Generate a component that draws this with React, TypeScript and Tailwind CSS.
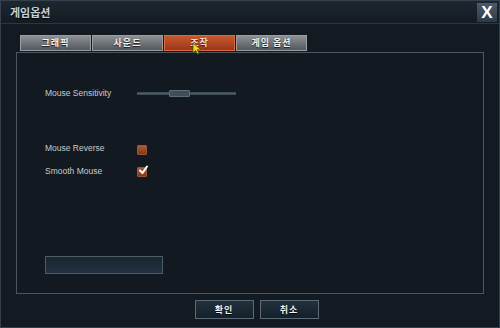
const kr = { fontFamily: '"Noto Sans CJK KR", "Noto Sans", sans-serif' };
const en = { fontFamily: '"Liberation Sans", Arial, sans-serif' };

function Tab({ label, active }: { label: string; active?: boolean }) {
  return (
    <div
      style={kr}
      className={
        active
          ? "w-[71px] h-[16px] flex items-center justify-center text-[9px] font-bold tracking-[1px] text-[#f4e0d6] border border-[#d86a44] bg-gradient-to-b from-[#c8582e] to-[#9c3718] [text-shadow:0_1px_1px_#3a1206]"
          : "w-[71px] h-[16px] flex items-center justify-center text-[9px] font-bold tracking-[1px] text-[#f2f2f2] border border-[#9a9ea2] bg-gradient-to-b from-[#8d9194] to-[#55595d] [text-shadow:0_1px_1px_#1a1a1a]"
      }
    >
      {label}
    </div>
  );
}

function Checkbox({ checked }: { checked?: boolean }) {
  return (
    <div className="relative w-[10px] h-[10px] rounded-[1px] border border-[#9a5636] bg-gradient-to-b from-[#b05a32] to-[#7e3a1c]">
      {checked && (
        <svg className="absolute -top-[3px] left-[0px]" width="11" height="11" viewBox="0 0 11 11">
          <path d="M2 5.5 L4.5 8 L9 1.5" stroke="#ffffff" strokeWidth="2" fill="none" strokeLinecap="round" />
        </svg>
      )}
    </div>
  );
}

function Btn({ label }: { label: string }) {
  return (
    <div
      style={kr}
      className="w-[59px] h-[19px] flex items-center justify-center text-[9px] font-bold tracking-[1px] text-[#eef2f4] border border-[#5b6a76] bg-gradient-to-b from-[#23313e] to-[#152029] [text-shadow:0_1px_1px_#000]"
    >
      {label}
    </div>
  );
}

export default function App() {
  return (
    <div className="relative w-[500px] h-[328px] bg-[#141a21] border border-[#34414c] flex flex-col overflow-hidden">
      {/* title bar */}
      <div className="h-[23px] flex items-center justify-between pl-[9px] pr-[2px] bg-gradient-to-b from-[#1d2730] to-[#141b22] border-b border-[#2b3640]">
        <span style={kr} className="text-[11px] font-bold text-[#c6d2da] [text-shadow:0_1px_1px_#000]">
          게임옵션
        </span>
        <div
          style={en}
          className="w-[20px] h-[19px] flex items-center justify-center bg-gradient-to-b from-[#4d5c6b] to-[#2c3a48] text-[17px] font-bold text-white leading-none"
        >
          X
        </div>
      </div>

      {/* tabs */}
      <div className="flex gap-[1px] pl-[19px] mt-[11px]">
        <Tab label="그래픽" />
        <Tab label="사운드" />
        <Tab label="조작" active />
        <Tab label="게임 옵션" />
      </div>

      {/* content panel */}
      <div className="mx-[15px] mt-[1px] h-[242px] border border-[#4a5660] bg-[#131920] pl-[28px] pt-[34px]" style={en}>
        <div className="flex items-center h-[12px]">
          <span className="w-[92px] text-[8.5px] text-[#c4ccd2]">Mouse Sensitivity</span>
          <div className="relative w-[99px] h-[3px] bg-[#4d5d68] border-y border-[#3c4a54]">
            <div className="absolute left-[32px] -top-[3px] w-[21px] h-[7px] bg-[#3f4f5a] border border-[#5d6d78] rounded-[1px]" />
          </div>
        </div>
        <div className="flex items-center h-[12px] mt-[43px]">
          <span className="w-[92px] text-[8.5px] text-[#c4ccd2]">Mouse Reverse</span>
          <div className="mt-[3px]">
            <Checkbox />
          </div>
        </div>
        <div className="flex items-center h-[12px] mt-[11px]">
          <span className="w-[92px] text-[8.5px] text-[#c4ccd2]">Smooth Mouse</span>
          <div className="mt-[2px]">
            <Checkbox checked />
          </div>
        </div>
        <div className="mt-[79px] w-[118px] h-[18px] border border-[#4e5c66] bg-gradient-to-b from-[#1a2632] to-[#223140]" />
      </div>

      {/* buttons */}
      <div className="flex justify-center gap-[6px] mt-[6px] pl-[13px]">
        <Btn label="확인" />
        <Btn label="취소" />
      </div>

      {/* cursor */}
      <svg className="absolute left-[191px] top-[41px]" width="11" height="13" viewBox="0 0 11 13">
        <path d="M1 1 L1 11 L3.5 8.5 L5.5 12 L7 11.3 L5.2 7.8 L9 7.8 Z" fill="#e8e020" stroke="#4a4a10" strokeWidth="0.8" />
      </svg>
    </div>
  );
}
